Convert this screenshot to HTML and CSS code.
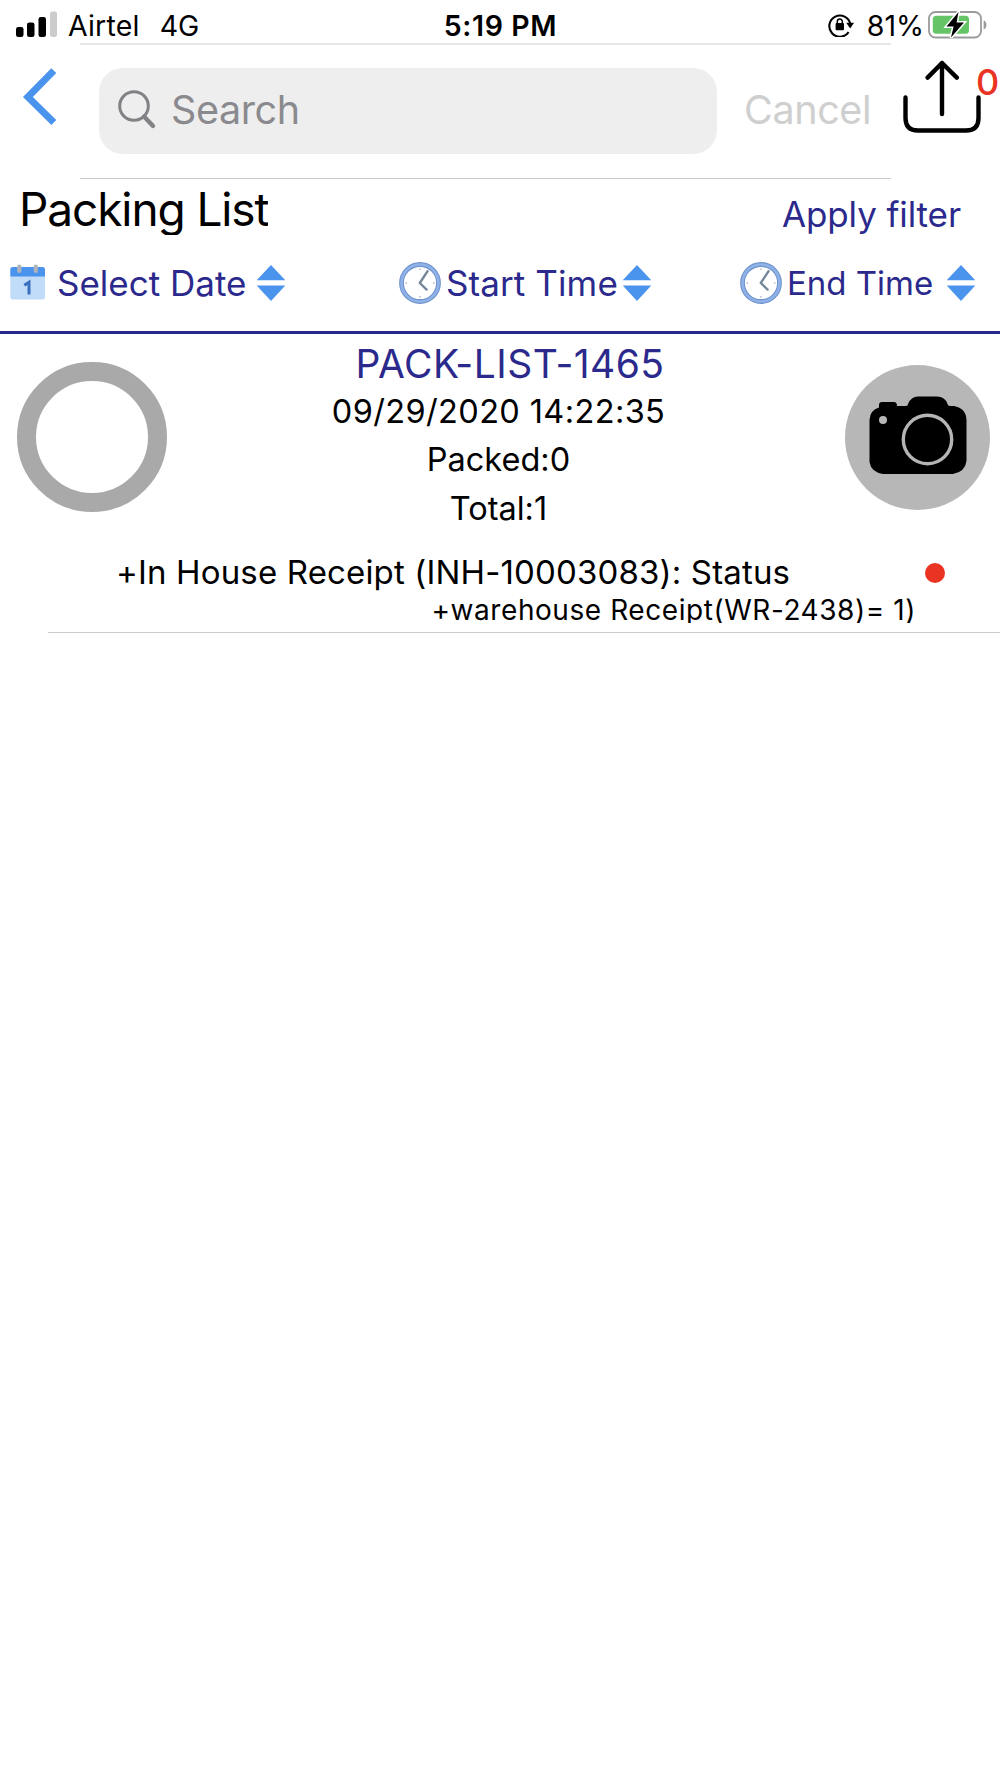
FILE: index.html
```html
<!DOCTYPE html>
<html lang="en">
<head>
    <meta charset="UTF-8">
    <meta name="viewport" content="width=device-width, initial-scale=1.0">
    <title>Packing List</title>
    <link rel="stylesheet" href="styles.css">
</head>
<body>
    <svg class="defs" width="0" height="0">
        <symbol id="sort" viewBox="0 0 30 38">
            <path d="M15 1 L29.3 16.2 H0.7 Z M0.7 21.6 H29.3 L15 37 Z" fill="#4a94ee"/>
        </symbol>
        <symbol id="clock" viewBox="0 0 42 42">
            <circle cx="21" cy="21" r="18.5" fill="#fff" stroke="#6f93cc" stroke-width="4.8"/>
            <circle cx="21" cy="21" r="18.5" fill="none" stroke="#8fb2e8" stroke-width="2.6"/>
            <path d="M21 6.5v1.5M21 34v1.5M6.5 21h1.5M34 21h1.5" stroke="#c4ccd4" stroke-width="2"/>
            <path d="M28.6 9.2 L20.8 21 L27.6 27.6" fill="none" stroke="#74879a" stroke-width="2.4" stroke-linecap="round" stroke-linejoin="round"/>
        </symbol>
    </svg>

    <div class="status-bar">
        <div class="carrier">
            <svg class="signal" width="42" height="27" viewBox="0 0 42 27">
                <rect x="0" y="16" width="7.5" height="10" rx="2.3"/>
                <rect x="11" y="11.5" width="7.5" height="14.5" rx="2.3"/>
                <rect x="22.5" y="6" width="7.5" height="20" rx="2.3"/>
                <rect x="34" y="0.5" width="7" height="25.5" rx="2.3" fill="#ccc"/>
            </svg>
            <span class="operator">Airtel</span>
            <span class="network">4G</span>
        </div>
        <div class="clock-time">5:19 PM</div>
        <div class="power">
            <svg class="lock" width="27" height="24" viewBox="0 0 27 24">
                <path d="M20.6 19.2 A10.6 10.6 0 1 1 22.3 11" fill="none" stroke="#000" stroke-width="2.1"/>
                <path d="M18.2 9.8 H26 L22.2 15.4 Z"/>
                <rect x="7.6" y="10" width="8.4" height="7.2" rx="1"/>
                <path d="M9.3 10.5 V8.6 a2.5 2.7 0 0 1 5 0 V10.5" fill="none" stroke="#000" stroke-width="1.5"/>
            </svg>
            <span class="percent">81%</span>
            <svg class="battery" width="60" height="30" viewBox="0 0 60 30">
                <rect x="1" y="2" width="52" height="25.5" rx="6.5" fill="#fff" stroke="#9b9b9b" stroke-width="1.8"/>
                <rect x="4.8" y="5.8" width="36.2" height="18" rx="3.5" fill="#65c466"/>
                <path d="M55.6 10.2 c3.8 1.8 3.8 7.6 0 9.4 Z" fill="#9b9b9b"/>
                <path d="M30.5 2 L18.5 16.6 H25.6 L23 27.5 L36 12.4 H28.6 Z" stroke="#fff" stroke-width="3" paint-order="stroke"/>
            </svg>
        </div>
    </div>

    <div class="nav">
        <svg class="back" width="80" height="136" viewBox="0 0 80 136">
            <path d="M53.8 27.6 L27.9 54 L53.8 79.6" fill="none" stroke="#4a94ee" stroke-width="7"/>
        </svg>
        <div class="search-bar">
            <div class="search-field">
                <svg width="40" height="42" viewBox="0 0 40 42">
                    <circle cx="17" cy="17" r="14.3" fill="none" stroke="#828286" stroke-width="3"/>
                    <path d="M27 27.5 L36 37" stroke="#828286" stroke-width="4.4" stroke-linecap="round"/>
                </svg>
                <span class="placeholder">Search</span>
            </div>
            <span class="cancel">Cancel</span>
        </div>
        <div class="share">
            <svg width="80" height="76" viewBox="0 0 80 76" fill="none" stroke="#000" stroke-width="4.4" stroke-linecap="round" stroke-linejoin="round">
                <path d="M3.5 37.5 V58 Q3.5 70.5 16 70.5 H64 Q76.5 70.5 76.5 58 V37.5"/>
                <path d="M40 54 V3 M25.6 17.6 L40 3 L54.8 17.6"/>
            </svg>
            <span class="badge">0</span>
        </div>
    </div>

    <div class="title-row">
        <span class="title">Packing List</span>
        <span class="apply">Apply filter</span>
    </div>

    <div class="filters">
        <div class="filter date">
            <svg class="calendar" width="36" height="37" viewBox="0 0 36 37">
                <path d="M0.3 12 H35 V33 a2.5 2.5 0 0 1 -2.5 2.5 H2.8 a2.5 2.5 0 0 1 -2.5 -2.5 Z" fill="#c0dcf8"/>
                <path d="M0.3 12.4 V5.5 a2.5 2.5 0 0 1 2.5 -2.5 H32.5 a2.5 2.5 0 0 1 2.5 2.5 V12.4 Z" fill="#4a94ee"/>
                <rect x="7.2" y="0.5" width="4.2" height="8.6" rx="2" fill="#b0b4b8"/>
                <rect x="23.7" y="0.5" width="4.2" height="8.6" rx="2" fill="#b0b4b8"/>
                <path d="M14.3 21.2 L19 18.2 V30.5" fill="none" stroke="#3a6fc0" stroke-width="3"/>
            </svg>
            <span class="label">Select Date</span>
            <svg class="sort" width="30" height="38"><use href="#sort"/></svg>
        </div>
        <div class="filter start">
            <svg width="42" height="42"><use href="#clock"/></svg>
            <span class="label">Start Time</span>
            <svg class="sort" width="30" height="38"><use href="#sort"/></svg>
        </div>
        <div class="filter end">
            <svg width="42" height="42"><use href="#clock"/></svg>
            <span class="label">End Time</span>
            <svg class="sort" width="30" height="38"><use href="#sort"/></svg>
        </div>
    </div>

    <div class="item">
        <div class="summary">
            <div class="progress"></div>
            <div class="info">
                <div class="number">PACK-LIST-1465</div>
                <div class="created">09/29/2020 14:22:35</div>
                <div class="packed">Packed:0</div>
                <div class="total">Total:1</div>
            </div>
            <div class="camera">
                <svg width="98" height="80" viewBox="0 0 98 80">
                    <path d="M0.5 24 Q1 14 10 11.5 V9 Q10 6 13 6 H25 Q28 6 28 10 H37 Q39 10 39 8 Q42 0.5 49 0.5 H68 Q76 0.5 78.5 8 Q79 10 81 10 H85 Q97 12 97.5 24 V65 Q96 76 84 78 H14 Q2 76 0.5 66 Z"/>
                    <circle cx="58.5" cy="43.5" r="24.2" fill="none" stroke="#b5b5b5" stroke-width="3.4"/>
                    <circle cx="14" cy="24" r="4" fill="#b7b7b7"/>
                </svg>
            </div>
        </div>
        <div class="receipt">
            <span class="house">+In House Receipt (INH-10003083): Status</span>
            <span class="dot"></span>
        </div>
        <div class="warehouse">+warehouse Receipt(WR-2438)= 1)</div>
    </div>
</body>
</html>
```
FILE: styles.css
```css
:root {
    --color-accent: #2b2a8c;
    --color-red: #eb3323;
    --color-line: #cccccc;
}

* {
    box-sizing: border-box;
}

body {
    margin: 0;
    background: #ffffff;
    color: #000000;
    font-family: Inter, 'Liberation Sans', sans-serif;
    white-space: nowrap;
}

svg {
    display: block;
    flex: none;
}

.defs {
    position: absolute;
}

.status-bar {
    display: grid;
    grid-template-columns: 1fr 1fr 1fr;
    height: 43px;
    padding: 5px 12px 0 16px;
    font-size: 28.5px;
    line-height: 41px;
}

.carrier {
    display: flex;
}

.operator {
    letter-spacing: 0.2px;
}

.signal {
    margin: 6px 10px 0 0;
}

.network {
    margin-left: 20px;
}

.clock-time {
    padding-right: 3px;
    text-align: center;
    font-weight: 600;
    letter-spacing: 0.6px;
}

.power {
    display: flex;
    justify-content: flex-end;
}

.lock {
    margin: 8px 12px 0 0;
}

.battery {
    margin: 5px 0 0 4px;
}

.nav {
    display: grid;
    grid-template-columns: 80px 811px 109px;
    height: 136px;
}

.search-bar {
    display: flex;
    align-items: center;
    border-top: 2px solid #e8e8e8;
    border-bottom: 1px solid var(--color-line);
    padding: 0 0 1px 19px;
    font-size: 39.5px;
    letter-spacing: -0.4px;
}

.search-field {
    display: flex;
    flex: none;
    align-items: center;
    width: 618px;
    height: 86px;
    padding: 0 0 2px 18px;
    border-radius: 24px;
    background: #eeeeee;
    color: #8a8a8e;
}

.placeholder {
    margin-left: 14px;
}

.cancel {
    margin: 0 0 2px 27px;
    color: #cfcfcf;
}

.share {
    position: relative;
    padding: 17px 0 0 11px;
}

.badge {
    position: absolute;
    top: 17px;
    left: 85px;
    font-size: 36px;
    line-height: 44px;
    font-weight: 500;
    color: var(--color-red);
}

.title-row {
    display: flex;
    justify-content: space-between;
    height: 61px;
    padding: 0 39px 0 19px;
    line-height: 61px;
}

.title {
    height: 56px;
    overflow: hidden;
    font-size: 46px;
    letter-spacing: -1.1px;
}

.apply {
    padding-top: 5px;
    font-size: 35px;
    letter-spacing: -0.1px;
    color: var(--color-accent);
}

.filters {
    display: grid;
    grid-template-columns: 398px 341px 261px;
    height: 94px;
    padding-bottom: 6px;
    border-bottom: 3px solid #26298c;
    font-size: 35px;
    color: var(--color-accent);
}

.filter {
    display: flex;
    align-items: center;
}

.date {
    padding-left: 10px;
}

.date .label {
    margin: 0 10px 0 11px;
}

.start,
.end {
    padding-left: 1px;
}

.start .label {
    margin: 0 4px 0 5px;
    letter-spacing: 0.1px;
}

.end .label {
    margin: 0 13px 0 5px;
    font-size: 33px;
}

.item {
    height: 299px;
    margin-left: 48px;
    border-bottom: 1px solid var(--color-line);
}

.summary {
    display: grid;
    grid-template-columns: 150px 1fr 145px;
    height: 197px;
    margin: 0 10px 0 -31px;
}

.progress {
    width: 150px;
    height: 150px;
    margin-top: 28px;
    border: 19.5px solid #a9a9a9;
    border-radius: 50%;
}

.info {
    padding: 6px 15px 0 0;
    font-size: 32.5px;
    line-height: 48px;
    text-align: center;
}

.number {
    padding-left: 23px;
    font-size: 39px;
    letter-spacing: 0.45px;
    color: var(--color-accent);
}

.created {
    letter-spacing: 0.38px;
}

.total {
    padding-top: 1px;
}

.camera {
    display: grid;
    justify-content: center;
    width: 145px;
    height: 145px;
    margin-top: 31px;
    padding-top: 31px;
    border-radius: 50%;
    background: #b7b7b7;
}

.receipt {
    display: flex;
    justify-content: space-between;
    align-items: center;
    height: 59px;
    padding: 22px 55px 0 68px;
    font-size: 33px;
    letter-spacing: 0.15px;
}

.dot {
    width: 20px;
    height: 20px;
    margin-top: 3px;
    border-radius: 50%;
    background: var(--color-red);
}

.warehouse {
    height: 33px;
    padding-right: 84px;
    overflow: hidden;
    font-size: 28px;
    line-height: 40px;
    letter-spacing: 0.56px;
    text-align: right;
}
```
